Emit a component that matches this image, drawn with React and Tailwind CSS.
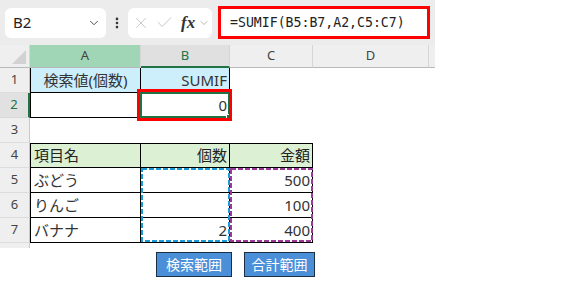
import { Fragment } from "react";
import { ChevronDown, EllipsisVertical, X, Check } from "lucide-react";

const jp = "font-['Noto_Sans','Noto_Sans_CJK_JP',sans-serif]";

function ColHead({ label, className = "" }) {
    return (
        <div className={`flex items-center justify-center border-r border-b border-r-[#d6d6d6] border-b-[#b8b8b8] text-[13px] text-[#444] font-['Noto_Sans',sans-serif] ${className}`}>
            {label}
        </div>
    );
}

function RowHead({ label, active }) {
    return (
        <div
            className={
                active
                    ? "flex items-center justify-center bg-[#e1e1e1] border-r-2 border-r-[#217346] border-b border-b-[#d8d8d8] text-[13px] text-[#217346] font-['Noto_Sans',sans-serif]"
                    : "flex items-center justify-center bg-[#efefef] border-r border-r-[#c8c8c8] border-b border-b-[#dcdcdc] text-[13px] text-[#444] font-['Noto_Sans',sans-serif]"
            }
        >
            {label}
        </div>
    );
}

const rows = [
    ["5", "ぶどう", "", "500"],
    ["6", "りんご", "", "100"],
    ["7", "バナナ", "2", "400"],
];

export default function App() {
    return (
        <div className="w-[574px] h-[282px] bg-white overflow-hidden">
            <div className="w-[435px]">
                {/* toolbar */}
                <div className="flex h-[45px] items-center bg-[#ececec] pl-[5px]">
                    <div className="flex h-[30px] w-[101px] items-center justify-between rounded-md bg-white pl-[8px] pr-[5px] text-[15px] text-[#222] font-['Noto_Sans',sans-serif]">
                        <span>B2</span>
                        <ChevronDown size={14} strokeWidth={1.6} className="text-[#444]" />
                    </div>
                    <div className="flex w-[22px] justify-center text-[#333]">
                        <EllipsisVertical size={14} strokeWidth={2.6} />
                    </div>
                    <div className="flex h-[30px] w-[84px] items-center rounded-md bg-white pl-[4px]">
                        <X size={18} strokeWidth={1.1} className="text-[#bdbdbd]" />
                        <Check size={19} strokeWidth={1.1} className="ml-[5px] text-[#bdbdbd]" />
                        <span className="ml-[7px] font-['Liberation_Serif',serif] text-[17px] italic font-semibold text-[#333] leading-none">fx</span>
                        <ChevronDown size={12} strokeWidth={1.4} className="ml-[3px] text-[#999]" />
                    </div>
                    <div className="ml-[6px] flex h-[33px] w-[212px] items-center border-[3px] border-[#ff0000] bg-white pl-[9px] font-['DejaVu_Sans_Mono',monospace] text-[13.2px] text-[#222]">
                        =SUMIF(B5:B7,A2,C5:C7)
                    </div>
                </div>

                {/* sheet */}
                <div className={`grid grid-cols-[30px_111px_89px_83px_116px_6px] grid-rows-[23px_repeat(7,25px)_5px] bg-white ${jp}`}>
                    {/* header row */}
                    <div className="bg-[#efefef] border-r border-b border-r-[#d6d6d6] border-b-[#b8b8b8] flex items-end justify-end p-[3px]">
                        <svg width="14" height="14" viewBox="0 0 14 14">
                            <path d="M14 0 L14 14 L0 14 Z" fill="#d2d2d2" />
                        </svg>
                    </div>
                    <ColHead label="A" className="bg-[#a0d6b5]" />
                    <div className="flex items-center justify-center bg-[#e0e0e0] border-r border-r-[#d6d6d6] border-b-2 border-b-[#217346] text-[13px] text-[#217346] font-['Noto_Sans',sans-serif]">
                        B
                    </div>
                    <ColHead label="C" className="bg-[#efefef]" />
                    <ColHead label="D" className="bg-[#efefef]" />
                    <ColHead label="" className="bg-[#efefef] border-r-0" />

                    {/* row 1 */}
                    <RowHead label="1" />
                    <div className="flex items-center justify-center bg-[#cdeefb] border-l border-r border-b border-black text-[15px] text-[#333]">検索値(個数)</div>
                    <div className="flex items-center justify-end pr-[2px] bg-[#cdeefb] border-r border-b border-black text-[15px] text-[#333]">SUMIF</div>
                    <div />
                    <div />
                    <div />

                    {/* row 2 */}
                    <RowHead label="2" active />
                    <div className="border-l border-r border-b border-black" />
                    <div className="relative flex items-center justify-end pr-[2px] border-r border-b border-black text-[15px] text-[#333]">
                        0
                        <div className="absolute -top-px -left-px -right-px -bottom-px border-2 border-[#217346]" />
                        <div className="absolute -right-[2px] -bottom-[2px] h-[5px] w-[5px] bg-[#217346] border border-white" />
                        <div className="absolute -top-[4px] -left-[4px] -right-[3px] -bottom-[4px] border-[3px] border-[#ff0000]" />
                    </div>
                    <div />
                    <div />
                    <div />

                    {/* row 3 */}
                    <RowHead label="3" />
                    <div />
                    <div />
                    <div />
                    <div />
                    <div />

                    {/* row 4 */}
                    <RowHead label="4" />
                    <div className="flex items-center pl-[3px] bg-[#dcf0d4] border border-black text-[15px] text-[#222]">項目名</div>
                    <div className="flex items-center justify-end pr-[2px] bg-[#dcf0d4] border-t border-r border-b border-black text-[15px] text-[#222]">個数</div>
                    <div className="flex items-center justify-end pr-[2px] bg-[#dcf0d4] border-t border-r border-b border-black text-[15px] text-[#222]">金額</div>
                    <div />
                    <div />

                    {/* rows 5-7 */}
                    {rows.map(([n, name, qty, amt], i) => (
                        <Fragment key={n}>
                            <RowHead label={n} />
                            <div className="flex items-center pl-[3px] border-l border-r border-b border-black text-[15px] text-[#333]">{name}</div>
                            <div className="relative flex items-center justify-end pr-[2px] border-r border-b border-black text-[15px] text-[#333]">
                                {qty}
                                {i === 0 && (
                                    <svg width="89" height="75" className="absolute top-0 left-0 z-10 overflow-visible pointer-events-none">
                                        <rect x="1" y="1" width="87" height="72" fill="none" stroke="#1c9ad6" strokeWidth="2" strokeDasharray="5 2" />
                                    </svg>
                                )}
                            </div>
                            <div className="relative flex items-center justify-end pr-[2px] border-r border-b border-black text-[15px] text-[#333]">
                                {amt}
                                {i === 0 && (
                                    <svg width="83" height="75" className="absolute top-0 left-0 z-10 overflow-visible pointer-events-none">
                                        <rect x="1" y="1" width="81" height="72" fill="none" stroke="#9a3a96" strokeWidth="2" strokeDasharray="5 2" />
                                    </svg>
                                )}
                            </div>
                            <div />
                            <div />
                        </Fragment>
                    ))}

                    {/* row 8 (cut off) */}
                    <div className="bg-[#efefef] border-r border-r-[#c8c8c8]" />
                </div>
            </div>

            {/* buttons */}
            <div className={`mt-[4px] ml-[156px] flex gap-[12px] ${jp}`}>
                <button className="h-[25px] w-[76px] border border-[#1d2f45] bg-[#4a8fd8] text-[14px] text-white">検索範囲</button>
                <button className="h-[25px] w-[71px] border border-[#1d2f45] bg-[#4a8fd8] text-[14px] text-white">合計範囲</button>
            </div>
        </div>
    );
}
